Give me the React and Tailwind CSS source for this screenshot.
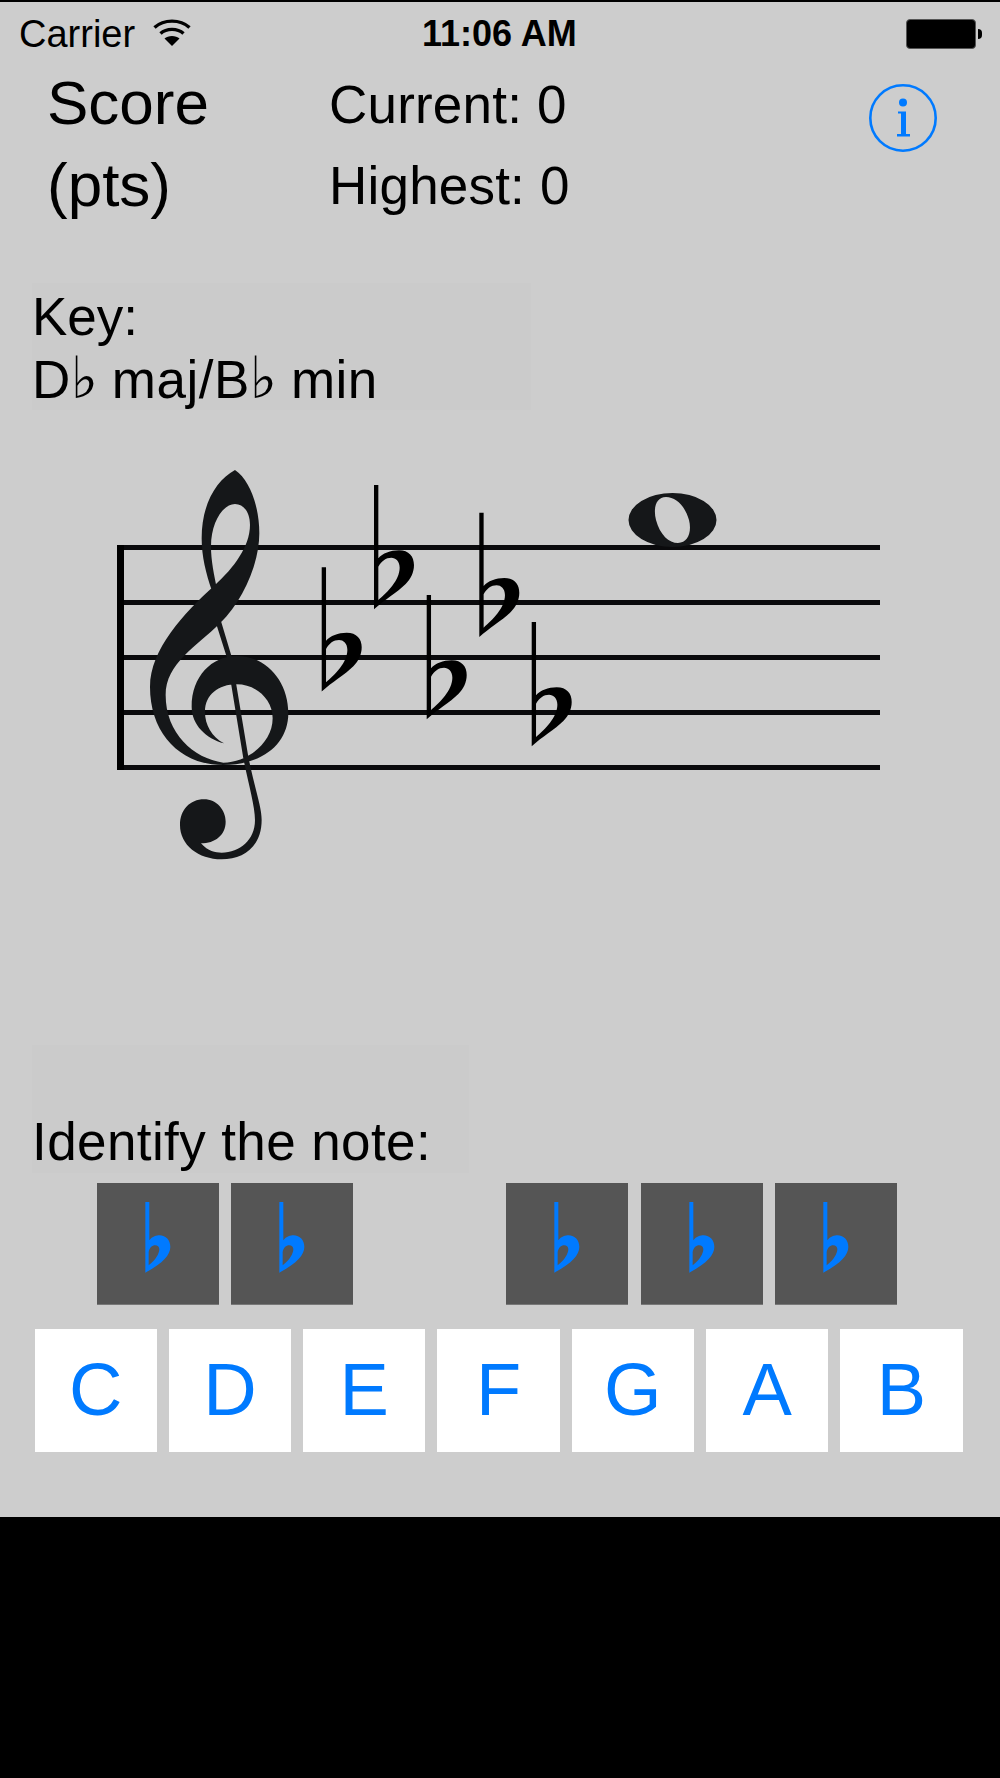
import React from 'react';

const CLEF = 'M372 880 C318 865 275 825 275 770 C275 680 335 618 410 618 C500 618 565 695 565 790 C565 880 490 945 370 945 C240 945 150 850 150 710 C150 600 250 490 345 405 C400 355 450 290 450 225 C450 185 430 162 405 162 C370 162 333 215 333 290 C333 330 342 375 352 420 L362 510 L395 620 L445 920 C465 1020 485 1070 485 1110 C485 1190 430 1228 365 1228 C295 1228 240 1185 240 1125 C240 1080 270 1048 312 1048 C350 1048 377 1080 377 1115 C377 1155 345 1180 303 1180 C325 1205 345 1208 365 1208 C420 1208 465 1170 465 1110 C465 1070 445 1000 430 925 L380 620 L345 510 L335 420 C318 370 305 320 305 265 C305 160 350 90 405 60 C450 90 478 170 478 250 C478 340 430 450 360 520 C290 590 197 640 197 735 C197 850 280 925 370 938 C440 938 518 880 518 805 C518 750 470 703 410 703 C355 703 315 735 315 785 C315 825 335 860 372 880 Z';

const FLAT = 'M0 0 H13 V220 C25 205 50 196 75 196 C105 196 120 215 120 240 C120 262 110 282 95 297 C70 322 30 345 0 373 Z M13 245 V345 C40 322 77 285 77 248 C77 228 65 218 52 218 C36 218 22 228 13 245 Z';

const SMALL_FLAT = 'M0 0 H12 V115 C20 103 35 100 42 100 C62 100 75 115 75 135 C75 160 50 185 0 212 Z M10 150 V190 C30 175 42 155 42 142 C42 134 36 130 30 130 C20 130 12 138 10 150 Z';

const staffLines = [547.5, 602.5, 657.5, 712.5, 767.5];
const flats = [[321.7, 567.3], [374, 485], [426.7, 595], [479.3, 512.7], [531.7, 622]];

function Staff() {
  // viewBox is in page coordinates so the numbers stay readable
  return (
    <svg className="block" width="1000" height="500" viewBox="0 450 1000 500">
      {staffLines.map(y => <rect key={y} x="117" y={y - 2.5} width="763" height="5" fill="#0a0a0c" />)}
      <rect x="117" y="545" width="7" height="225" fill="#000" />
      <path d={CLEF} transform="translate(100 450) scale(0.3333)" fill="#151719" />
      {flats.map(([x, y]) => (
        <path key={x} d={FLAT} transform={`translate(${x} ${y}) scale(0.3333)`} fill="#000" fillRule="evenodd" />
      ))}
      <path
        fillRule="evenodd"
        fill="#151719"
        d="M628.5 520 a44 27 0 1 0 88 0 a44 27 0 1 0 -88 0 Z M666 497 C656 497 653 508 656 520 C660 535 669 543 678 543 C688 543 692 532 689 520 C685 506 676 497 666 497 Z"
      />
    </svg>
  );
}

function Wifi() {
  return (
    <svg width="40" height="29" viewBox="0 0 40 29" className="ml-[17px] mt-[-3px]" fill="none" stroke="#000">
      <path d="M2.5 9.5 C12 1 28 1 37.5 9.5" strokeWidth="3.4" />
      <path d="M8.5 15.5 C14.5 10 25.5 10 31.5 15.5" strokeWidth="3.4" />
      <path d="M20 28 L12.5 20.5 C16 17 24 17 27.5 20.5 Z" fill="#000" stroke="none" />
    </svg>
  );
}

function Battery() {
  return (
    <div className="flex items-center">
      <div className="w-[70px] h-[30px] bg-black border-[1.5px] border-[#555] rounded-[4px]" />
      <div className="w-[4px] h-[10px] ml-[2px] bg-black rounded-r-[4px]" />
    </div>
  );
}

function InfoIcon() {
  return (
    <svg width="68" height="68" viewBox="0 0 68 68">
      <circle cx="34" cy="34" r="32.7" fill="none" stroke="#007aff" strokeWidth="2.6" />
      <circle cx="34" cy="18.5" r="4" fill="#007aff" />
      <path d="M29 27.5 H37 V50 H41 V52.5 H28 V50 H32 V29.5 H29 Z" fill="#007aff" />
    </svg>
  );
}

function Flat() {
  return <span className="font-['DejaVu_Sans'] text-[58px] leading-[0] tracking-[-1.5px]">♭</span>;
}

function AccidentalKey() {
  return (
    <button className="w-[122px] h-[122px] bg-[#555555] border-b border-[#777] pl-[48px] pt-[19px] flex items-start">
      <svg className="block" width="26" height="71" viewBox="0 0 76 213">
        <path d={SMALL_FLAT} fill="#007aff" fillRule="evenodd" />
      </svg>
    </button>
  );
}

function NoteKey({ name }) {
  return (
    <button className="w-[122.3px] h-[122.5px] bg-white text-[#007aff] text-[74px] leading-none flex items-center justify-center">
      {name}
    </button>
  );
}

export default function App() {
  return (
    <div className="w-[1000px] h-[1778px] bg-black pt-[2px] font-['Liberation_Sans',sans-serif] text-black overflow-hidden">
      <div className="h-[1515px] bg-[#cdcdcd]">
        <div className="h-[58px] relative flex items-center pl-[19px] pr-[18px] pt-[6px]">
          <span className="text-[38px] leading-[44px]">Carrier</span>
          <Wifi />
          <span className="absolute left-[422px] top-[10px] text-[36px] leading-[44px] font-bold">11:06 AM</span>
          <div className="ml-auto"><Battery /></div>
        </div>

        <div className="flex h-[164px] pl-[47px] pt-[2px] relative">
          <div className="w-[282px] text-[62px] leading-[82px]">
            <div>Score</div>
            <div>(pts)</div>
          </div>
          <div className="text-[53px] leading-[81px] tracking-[0.2px] mt-[2px]">
            <div>Current: 0</div>
            <div>Highest: 0</div>
          </div>
          <div className="absolute left-[869px] top-[24px]"><InfoIcon /></div>
        </div>

        <div className="mt-[59px] ml-[32px] w-[499px] h-[127px] bg-[#cbcbcb] text-[53px] leading-[63px] pt-[2px]">
          <div>Key:</div>
          <div className="tracking-[0.5px]">D<Flat /> maj/B<Flat /> min</div>
        </div>

        <div className="mt-[40px]"><Staff /></div>

        <div className="mt-[95px] ml-[32px] w-[437px] h-[128px] bg-[#cbcbcb] text-[53px] leading-[63px] tracking-[0.4px] pt-[65px]">
          Identify the note:
        </div>

        <div className="mt-[10px] flex pl-[97px] gap-[12.3px]">
          <AccidentalKey />
          <AccidentalKey />
          <div className="w-[128.5px]" />
          <AccidentalKey />
          <AccidentalKey />
          <AccidentalKey />
        </div>

        <div className="mt-[24px] flex pl-[34.5px] gap-[12px]">
          {['C', 'D', 'E', 'F', 'G', 'A', 'B'].map(n => <NoteKey key={n} name={n} />)}
        </div>
      </div>
    </div>
  );
}
